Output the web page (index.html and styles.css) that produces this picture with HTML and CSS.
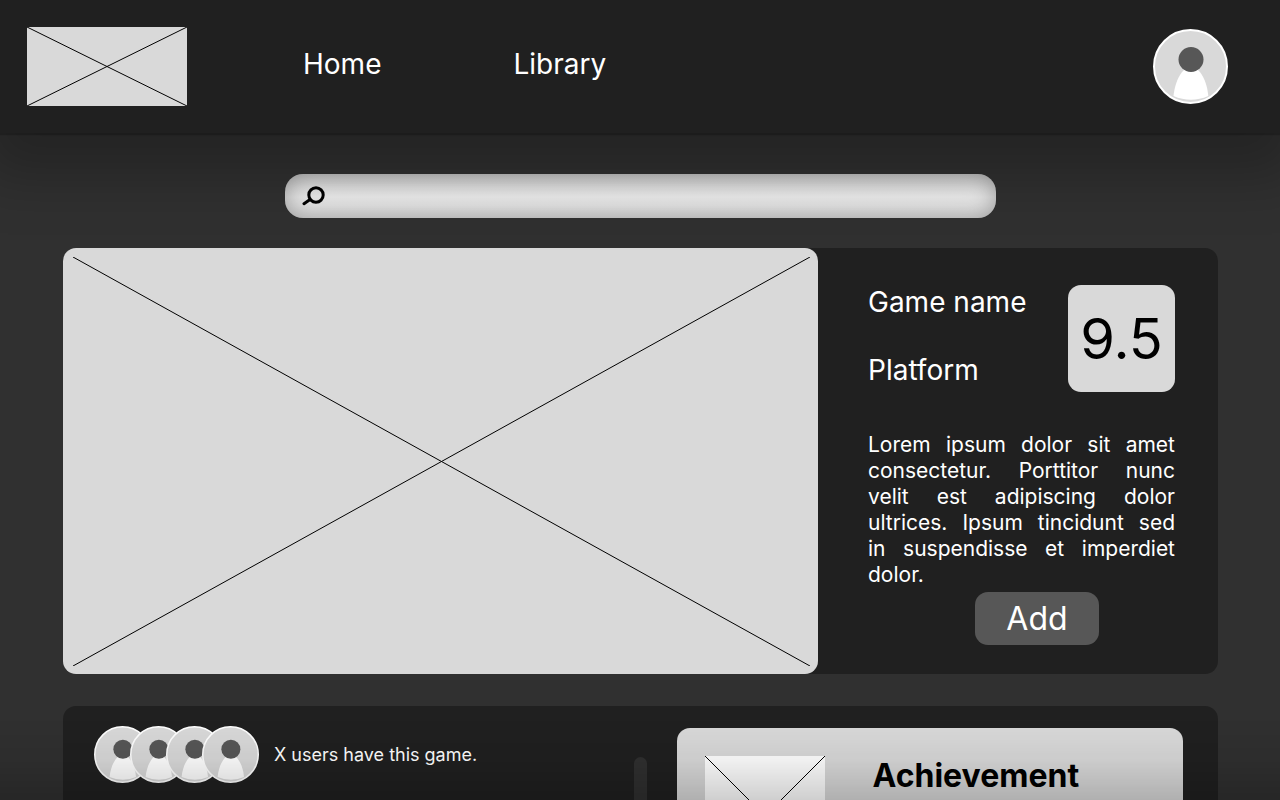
FILE: index.html
```html
<!DOCTYPE html>
<html lang="en">
<head>
<meta charset="utf-8">
<meta name="viewport" content="width=device-width, initial-scale=1">
<title>Game name</title>
<link rel="stylesheet" href="styles.css">
</head>
<body>
<svg class="symbols" aria-hidden="true">
  <symbol id="avatar" viewBox="0 0 75 75">
    <circle cx="37.5" cy="37.5" r="36.5" fill="#d9d9d9" stroke="#fff" stroke-width="2"/>
    <path d="M20.5 67C22 52 29 38 38 38S54 52 55.300 67Q38 74.500 20.500 67Z" fill="#fff"/>
    <circle cx="38" cy="30.500" r="12.500" fill="#575757"/>
  </symbol>
  <symbol id="cross" viewBox="0 0 100 100" preserveAspectRatio="none">
    <path d="M0 0L100 100M0 100L100 0" fill="none" stroke="#000" stroke-width="1" vector-effect="non-scaling-stroke"/>
  </symbol>
</svg>
<div class="page">
  <header class="header">
    <a class="logo" href="#" aria-label="Logo"><svg class="cross"><use href="#cross"/></svg></a>
    <nav class="nav">
      <a href="#">Home</a>
      <a href="#">Library</a>
    </nav>
    <button class="profile" type="button" aria-label="Profile"><svg><use href="#avatar"/></svg></button>
  </header>
  <main class="main">
    <label class="search">
      <svg class="search-icon" viewBox="0 0 24 22" aria-hidden="true" fill="none" stroke="#000" stroke-width="3" stroke-linecap="round">
        <circle cx="14" cy="10" r="7.200"/>
        <path d="M8 14.500L2 18.700"/>
      </svg>
      <input type="search" aria-label="Search">
    </label>
    <section class="game">
      <div class="cover"><svg class="cross"><use href="#cross"/></svg></div>
      <div class="details">
        <div class="summary">
          <div class="names">
            <h1>Game name</h1>
            <p>Platform</p>
          </div>
          <div class="score">9.5</div>
        </div>
        <p class="description">Lorem ipsum dolor sit amet consectetur. Porttitor nunc velit est adipiscing dolor ultrices. Ipsum tincidunt sed in&nbsp;suspendisse et imperdiet dolor.</p>
        <button class="add" type="button">Add</button>
      </div>
    </section>
    <section class="community">
      <div class="owners">
        <div class="avatars">
          <svg><use href="#avatar"/></svg>
          <svg><use href="#avatar"/></svg>
          <svg><use href="#avatar"/></svg>
          <svg><use href="#avatar"/></svg>
        </div>
        <p>X users have this game.</p>
      </div>
      <div class="divider"></div>
      <article class="achievement">
        <div class="thumb"><svg class="cross"><use href="#cross"/></svg></div>
        <h2>Achievement</h2>
      </article>
    </section>
  </main>
  <div class="fade"></div>
</div>
</body>
</html>
```
FILE: styles.css
```css
* {
  box-sizing: border-box;
}

body {
  margin: 0;
  background: #303030;
  color: #fff;
  font-family: Inter, "Liberation Sans", sans-serif;
  font-variant-ligatures: none;
}

h1,
h2,
p {
  margin: 0;
  font-weight: 400;
}

a {
  color: inherit;
  text-decoration: none;
}

button {
  border: 0;
  padding: 0;
  color: inherit;
  font-family: inherit;
  cursor: pointer;
}

svg {
  display: block;
}

.symbols {
  position: absolute;
  width: 0;
  height: 0;
}

.cross {
  width: 100%;
  height: 100%;
  overflow: visible;
}

.page {
  display: flex;
  flex-direction: column;
  height: 100vh;
  overflow: hidden;
}

.header {
  flex: none;
  display: flex;
  align-items: center;
  padding: 27px 52px 27px 27px;
  background: #202020;
  box-shadow: 0 2px 1px rgba(0, 0, 0, 0.2), 0 24px 53px 18px rgba(0, 0, 0, 0.25);
}

.logo {
  width: 160px;
  height: 79px;
  background: #d9d9d9;
}

.nav {
  display: flex;
  gap: 132px;
  margin-left: 116px;
  margin-right: auto;
  padding-bottom: 6px;
  font-size: 28px;
  line-height: 34px;
}

.profile {
  width: 75px;
  height: 75px;
  border-radius: 50%;
  background: none;
}

.profile svg {
  width: 100%;
  height: 100%;
}

.main {
  flex: 1;
  min-height: 0;
  overflow-y: auto;
  scrollbar-width: none;
  padding: 41px 62px 0 63px;
}

.search {
  display: flex;
  align-items: center;
  width: 62%;
  max-width: 711px;
  height: 44px;
  margin: 0 auto 30px;
  padding: 0 17px;
  border-radius: 18px;
  background: linear-gradient(#c2c2c2, #e2e2e2 52%, #dcdcdc);
  box-shadow: inset 0 0 22px rgba(0, 0, 0, 0.3);
}

.search-icon {
  flex: none;
  width: 24px;
  height: 22px;
}

.search input {
  flex: 1;
  min-width: 0;
  height: 100%;
  margin-left: 10px;
  border: 0;
  outline: 0;
  background: none;
  font: inherit;
}

.game {
  display: grid;
  grid-template-columns: 755fr 400fr;
  border-radius: 13px;
  background: #202020;
}

.cover {
  min-width: 0;
  padding: 9px 8px 8px 10px;
  border-radius: 13px;
  background: #d9d9d9;
}

.details {
  display: flex;
  flex-direction: column;
  min-width: 0;
  padding: 37px 43px 29px 50px;
}

.summary {
  display: flex;
  justify-content: space-between;
}

.names {
  display: flex;
  flex-direction: column;
  gap: 34px;
  font-size: 28px;
  line-height: 34px;
}

h1 {
  font-size: inherit;
}

.score {
  display: grid;
  place-items: center;
  width: 107px;
  height: 107px;
  border-radius: 13px;
  background: #d9d9d9;
  color: #000;
  font-size: 56px;
}

.description {
  margin-top: 40px;
  font-size: 21px;
  line-height: 26px;
  text-align: justify;
}

.add {
  align-self: flex-end;
  width: 124px;
  height: 53px;
  margin: 4px 76px 0 0;
  border-radius: 13px;
  background: #575757;
  font-size: 32px;
}

.community {
  display: flex;
  align-items: flex-start;
  min-height: 420px;
  margin-top: 32px;
  padding: 20px 35px 28px 31px;
  border-radius: 13px;
  background: #202020;
}

.owners {
  flex: 1;
  display: flex;
  align-items: center;
  gap: 15px;
  font-size: 18px;
}

.avatars {
  display: flex;
}

.avatars svg {
  width: 57px;
  height: 57px;
}

.avatars svg + svg {
  margin-left: -21px;
}

.divider {
  width: 13px;
  height: 320px;
  margin: 31px 30px 0 0;
  border-radius: 7px;
  background: #303030;
}

.achievement {
  display: flex;
  gap: 48px;
  width: calc(50% - 38px);
  margin-top: 2px;
  padding: 28px;
  border-radius: 13px;
  background: #d9d9d9;
  color: #000;
}

.thumb {
  width: 120px;
  height: 120px;
  background: #fff;
}

.achievement h2 {
  font-size: 32px;
  font-weight: 700;
  line-height: 40px;
}

.fade {
  position: fixed;
  z-index: 2;
  left: 0;
  right: 0;
  bottom: 0;
  height: 80px;
  background: linear-gradient(rgba(0, 0, 0, 0), rgba(0, 0, 0, 0.06) 50%, rgba(0, 0, 0, 0.19));
  pointer-events: none;
}
```
